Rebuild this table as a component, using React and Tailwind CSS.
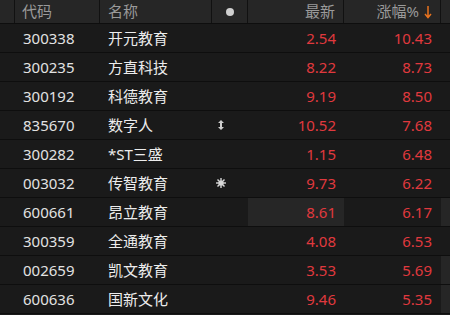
const rows = [
  { code: "300338", name: "开元教育", price: "2.54", pct: "10.43" },
  { code: "300235", name: "方直科技", price: "8.22", pct: "8.73" },
  { code: "300192", name: "科德教育", price: "9.19", pct: "8.50" },
  { code: "835670", name: "数字人", price: "10.52", pct: "7.68", icon: "updown" },
  { code: "300282", name: "*ST三盛", price: "1.15", pct: "6.48" },
  { code: "003032", name: "传智教育", price: "9.73", pct: "6.22", icon: "star" },
  { code: "600661", name: "昂立教育", price: "8.61", pct: "6.17", hl: true, edge: true },
  { code: "300359", name: "全通教育", price: "4.08", pct: "6.53" },
  { code: "002659", name: "凯文教育", price: "3.53", pct: "5.69", edge: true },
  { code: "600636", name: "国新文化", price: "9.46", pct: "5.35", edge: true },
];

function UpDown() {
  return (
    <svg width="6" height="10" viewBox="0 0 6 10" className="ml-[6px]">
      <path d="M3 0 L6 3 L4 3 L4 7 L6 7 L3 10 L0 7 L2 7 L2 3 L0 3 Z" fill="#cfcfcf" />
    </svg>
  );
}

function Star() {
  return (
    <svg width="10" height="10" viewBox="0 0 10 10" className="ml-[4px]">
      <g stroke="#d8d8d8" strokeWidth="1.4">
        <line x1="5" y1="0" x2="5" y2="10" />
        <line x1="0" y1="5" x2="10" y2="5" />
        <line x1="1.5" y1="1.5" x2="8.5" y2="8.5" />
        <line x1="8.5" y1="1.5" x2="1.5" y2="8.5" />
      </g>
      <circle cx="5" cy="5" r="2.6" fill="#d8d8d8" />
    </svg>
  );
}

export default function App() {
  return (
    <div
      className="w-[450px] h-[315px] overflow-hidden bg-[#1a1a1a] text-[15px] leading-none"
      style={{ fontFamily: '"Noto Sans", "Noto Sans CJK SC", sans-serif' }}
    >
      <div className="flex h-[24px] bg-[#262626] border-b border-[#0e0e0e] text-[#9a9a9a]">
        <div className="w-[15px] border-r border-[#111]" />
        <div className="w-[85px] pl-[7px] flex items-center border-r border-[#111]">代码</div>
        <div className="w-[112px] pl-[8px] flex items-center border-r border-[#111]">名称</div>
        <div className="w-[36px] flex items-center justify-center border-r border-[#111]">
          <span className="w-[8px] h-[8px] rounded-full bg-[#cfcfcf]" />
        </div>
        <div className="w-[96px] pr-[8px] flex items-center justify-end border-r border-[#111]">最新</div>
        <div className="w-[97px] pr-[8px] flex items-center justify-end border-r border-[#111]">
          涨幅%
          <svg width="8" height="14" viewBox="0 0 8 14" className="ml-[5px]">
            <path d="M4 1 L4 12 M1 9 L4 12.5 L7 9" stroke="#e8731f" strokeWidth="1.5" fill="none" />
          </svg>
        </div>
        <div className="flex-1" />
      </div>
      {rows.map((r) => (
        <div key={r.code} className="flex h-[29px] border-b border-[#0e0e0e]">
          <div className="w-[15px]" />
          <div className="w-[85px] pl-[8px] flex items-center text-[#e2e2e2]">{r.code}</div>
          <div className="w-[112px] pl-[8px] flex items-center text-[#ececec]">{r.name}</div>
          <div className="w-[36px] flex items-center">
            {r.icon === "updown" && <UpDown />}
            {r.icon === "star" && <Star />}
          </div>
          <div
            className={
              "w-[96px] pr-[8px] flex items-center justify-end text-[#e0393e] " +
              (r.hl ? "bg-[#262626]" : "")
            }
          >
            {r.price}
          </div>
          <div className="w-[97px] pr-[9px] flex items-center justify-end text-[#e0393e]">{r.pct}</div>
          <div className={"flex-1 " + (r.edge ? "bg-[#262626]" : "")} />
        </div>
      ))}
    </div>
  );
}
